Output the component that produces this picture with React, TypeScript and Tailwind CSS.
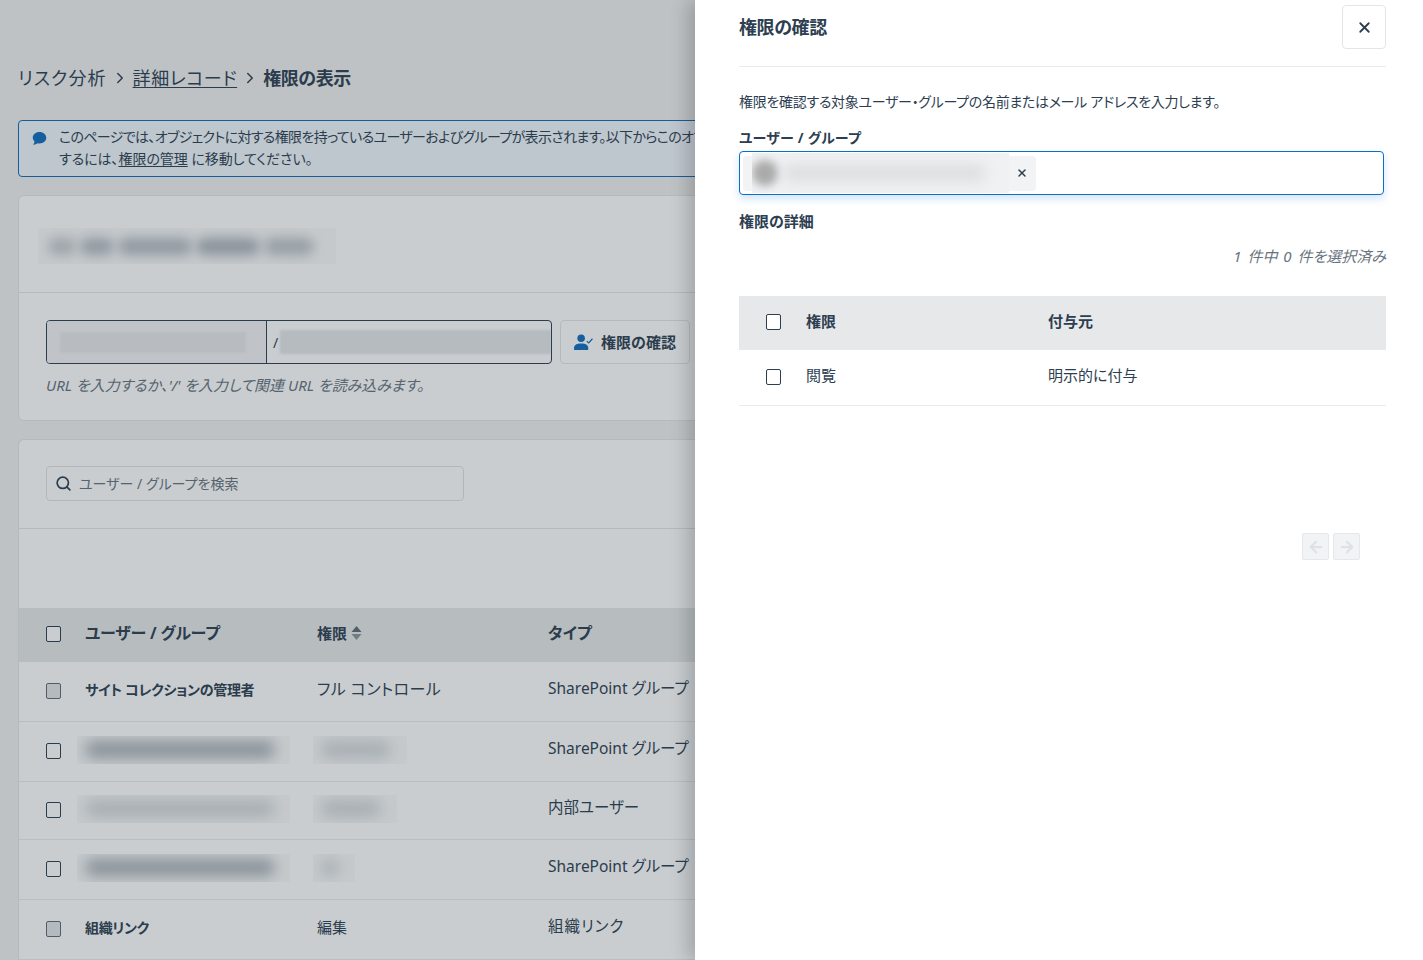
import React from "react";
import { ArrowLeft, ArrowRight, ChevronRight, Search, X } from "lucide-react";

const Checkbox = ({ disabled }: { disabled?: boolean }) => (
  <span
    className={
      disabled
        ? "block w-[15px] h-[16px] mb-[2px] shrink-0 rounded-[2px] border border-[#5f6b76] bg-[#e5e6e8]"
        : "block w-[15px] h-[16px] mb-[2px] shrink-0 rounded-[2px] border border-[#2d3e50] bg-white"
    }
  />
);

const Blur = ({ w, h, tone, box }: { w: number; h: number; tone: string; box: number }) => (
  <div className="overflow-hidden flex items-center pl-[8px] h-[28px] mb-[4px] bg-[#fafafa]" style={{ width: box }}>
    <div className={`rounded-full blur-[7px] ${tone}`} style={{ width: w, height: h }} />
  </div>
);

const titleBlobs = [
  { w: 28, tone: "bg-[#c4c8cc]" },
  { w: 34, tone: "bg-[#b4b9bf]" },
  { w: 74, tone: "bg-[#b5bac0]" },
  { w: 64, tone: "bg-[#acb2b8]" },
  { w: 50, tone: "bg-[#bcc1c6]" },
];

const rows = [
  { name: "サイト コレクションの管理者", perm: "フル コントロール", permClass: "text-[16px] tracking-[0.4px]", type: "SharePoint グループ", h: "h-[60px]", disabled: true },
  { blur: "bg-[#a9b0b6]", permW: 70, type: "SharePoint グループ", h: "h-[60px]" },
  { blur: "bg-[#d3d6d9]", permW: 60, type: "内部ユーザー", h: "h-[58px]" },
  { blur: "bg-[#a9b0b6]", permW: 18, type: "SharePoint グループ", h: "h-[60px]" },
  { name: "組織リンク", perm: "編集", permClass: "text-[15px]", type: "組織リンク", typeClass: "tracking-[1px]", h: "h-[60px]", disabled: true },
];

export default function App() {
  return (
    <div className="relative h-[960px] overflow-hidden bg-[#f1f1f1] text-[14px] text-[#2d3e50] font-['Noto_Sans','Noto_Sans_CJK_JP',sans-serif] [font-feature-settings:'palt']">
      <div className="w-[1387px] ml-[18px]">
        <div className="flex items-center h-[24px] mt-[66px] text-[18px]">
          <span className="tracking-[1.1px]">リスク分析</span>
          <ChevronRight className="w-[18px] h-[18px] mx-[4px]" />
          <span className="underline underline-offset-2 tracking-[0.6px]">詳細レコード</span>
          <ChevronRight className="w-[18px] h-[18px] mx-[4px]" />
          <span className="font-bold tracking-[-0.4px]">権限の表示</span>
        </div>

        <div className="flex mt-[30px] h-[57px] rounded-[4px] border border-[#0f6cbd] bg-[#f0f6fc] pl-[13px] pt-[5px] leading-[22px] whitespace-nowrap">
          <svg viewBox="0 0 16 16" className="w-[15px] h-[15px] mt-[5px] mr-[12px] shrink-0 fill-[#0f6cbd]">
            <path d="M8 1C3.9 1 .8 3.7.8 7c0 1.6.7 3 1.9 4.1-.1 1.2-.7 2.4-1.3 3.2-.1.2 0 .5.3.4 1.7-.2 3.2-.9 4.2-1.7.7.2 1.4.2 2.1.2 4.100 0 7.200-2.700 7.200-6S12.100 1 8 1z" />
          </svg>
          <div>
            <div className="tracking-[-0.65px]">このページでは、オブジェクトに対する権限を持っているユーザーおよびグループが表示されます。以下からこのオブ</div>
            <div className="tracking-[-0.05px]">
              するには、<span className="underline underline-offset-2">権限の管理</span> に移動してください。
            </div>
          </div>
        </div>

        <div className="mt-[18px] h-[226px] rounded-[6px] border border-[#e3e5e7] bg-white">
          <div className="h-[97px] border-b border-[#e3e5e7] pl-[19px] pt-[32px]">
            <div className="flex items-center gap-[4px] w-[298px] h-[36px] pl-[10px] bg-[#fafafa] overflow-hidden">
              {titleBlobs.map((b, i) => (
                <div key={i} className={`h-[17px] rounded-full blur-[6px] ${b.tone}`} style={{ width: b.w }} />
              ))}
            </div>
          </div>
          <div className="pl-[27px] pt-[27px]">
            <div className="flex">
              <div className="flex w-[506px] h-[44px] rounded-[4px] border border-[#2d3e50] overflow-hidden">
                <div className="w-[220px] shrink-0 border-r border-[#2d3e50] bg-[#f3f3f4] flex items-center pl-[13px]">
                  <div className="w-[186px] h-[21px] bg-[#e8e9ea] blur-[1px]" />
                </div>
                <div className="flex-1 flex items-center pl-[6px] gap-[2px]">
                  <span>/</span>
                  <div className="w-[271px] h-[24px] bg-[#e6e7e9] blur-[1px]" />
                </div>
              </div>
              <button className="flex items-center justify-center gap-[8px] w-[130px] h-[44px] ml-[8px] rounded-[4px] border border-[#e3e5e7] text-[15px] font-bold">
                <svg viewBox="0 0 20 18" className="w-[19px] h-[17px] fill-[#0f6cbd]">
                  <circle cx="7.500" cy="4.500" r="4" />
                  <path d="M0 17v-2.500C0 11.500 3 10 7.500 10s7.500 1.500 7.500 4.500V17z" />
                  <path d="M13.500 7.500l2 2 4-4.500" fill="none" stroke="#0f6cbd" strokeWidth="1.300" />
                </svg>
                権限の確認
              </button>
            </div>
            <p className="mt-[10px] leading-[22px] text-[15px] italic text-[#66727d]">
              URL を入力するか、'/' を入力して関連 URL を読み込みます。
            </p>
          </div>
        </div>

        <div className="mt-[18px] rounded-t-[6px] border border-b-0 border-[#e3e5e7] bg-white">
          <div className="h-[89px] border-b border-[#e3e5e7] pl-[27px] pt-[26px]">
            <div className="flex items-center w-[418px] h-[35px] rounded-[4px] border border-[#e0e2e4] pl-[8px] text-[#66727d]">
              <Search className="w-[17px] h-[17px] mr-[7px] text-[#2d3e50]" strokeWidth={2.4} />
              ユーザー / グループを検索
            </div>
          </div>
          <div className="h-[79px]" />
          <div className="flex items-center h-[54px] bg-[#e7e8e9] pl-[27px] font-bold">
            <Checkbox />
            <span className="w-[232px] ml-[24px] mb-[4px] text-[16px] tracking-[-0.2px]">ユーザー / グループ</span>
            <span className="w-[231px] mb-[4px] flex items-center gap-[4px] text-[15px]">
              権限
              <svg viewBox="0 0 10 14" className="w-[11px] h-[14px] fill-[#5f6b76]">
                <path d="M5 0l5 6H0z" />
                <path d="M5 14L0 8h10z" className="fill-[#8a939b]" />
              </svg>
            </span>
            <span className="mb-[4px] text-[16px]">タイプ</span>
          </div>
          {rows.map((row, i) => (
            <div key={i} className={`flex items-center pl-[27px] border-b border-[#e9ebec] ${row.h}`}>
              <Checkbox disabled={row.disabled} />
              {row.name ? (
                <span className="w-[232px] ml-[24px] mb-[5px] font-bold tracking-[-0.3px]">{row.name}</span>
              ) : (
                <div className="w-[240px] ml-[16px]">
                  <Blur w={190} h={17} tone={row.blur!} box={213} />
                </div>
              )}
              {row.perm ? (
                <span className={`w-[231px] mb-[5px] ${row.permClass}`}>{row.perm}</span>
              ) : (
                <div className="w-[231px] -ml-[4px] mr-[4px]">
                  <Blur w={row.permW!} h={17} tone="bg-[#d3d6d9]" box={row.permW! + 24} />
                </div>
              )}
              <span className={`mb-[5px] text-[15.500px] ${row.typeClass ?? ""}`}>{row.type}</span>
            </div>
          ))}
        </div>
      </div>

      <div className="absolute inset-0 bg-[#283844]/25" />

      <div className="absolute top-0 right-0 w-[728px] h-[960px] bg-white shadow-[-8px_0_16px_rgba(0,0,0,0.18)] pl-[44px] pr-[37px]">
        <div className="flex items-center justify-between h-[67px] pt-[5px] pb-[17px] border-b border-[#e9ebec]">
          <h2 className="text-[18px] font-bold tracking-[-0.4px]">権限の確認</h2>
          <button className="flex items-center justify-center w-[44px] h-[44px] rounded-[4px] border border-[#e3e5e7]">
            <X className="w-[17px] h-[17px]" strokeWidth={2.5} />
          </button>
        </div>
        <p className="mt-[24px] leading-[22px] tracking-[-0.3px]">権限を確認する対象ユーザー・グループの名前またはメール アドレスを入力します。</p>
        <div className="mt-[15px] leading-[20px] font-bold tracking-[0.2px]">ユーザー / グループ</div>
        <div className="flex items-center w-[645px] h-[44px] mt-[3px] rounded-[4px] border border-[#0a6ecb] pl-[3px] shadow-[0_4px_8px_rgba(10,110,203,0.18)]">
          <div className="flex items-center w-[293px] h-[35px] rounded-[4px] bg-[#f2f3f4]">
            <div className="flex items-center w-[257px] h-[40px] ml-[9px] bg-[#f0f1f3] overflow-hidden">
              <div className="w-[26px] h-[26px] shrink-0 rounded-full bg-[#aaaaaa] blur-[4px]" />
              <div className="w-[200px] h-[16px] ml-[6px] bg-[#dcdddf] blur-[7px]" />
            </div>
            <X className="w-[12px] h-[12px] ml-[7px]" strokeWidth={3} />
          </div>
        </div>
        <div className="mt-[15px] leading-[22px] text-[15px] font-bold">権限の詳細</div>
        <div className="mt-[13px] leading-[22px] text-right text-[15px] italic text-[#66727d] [word-spacing:2px]">1 件中 0 件を選択済み</div>
        <div className="flex items-center h-[54px] mt-[29px] bg-[#e7e8ea] pl-[27px] font-bold text-[15px]">
          <Checkbox />
          <span className="w-[242px] ml-[25px] mb-[4px]">権限</span>
          <span className="mb-[4px]">付与元</span>
        </div>
        <div className="flex items-center h-[56px] pl-[27px] border-b border-[#e9ebec] text-[15px]">
          <Checkbox />
          <span className="w-[242px] ml-[25px] mb-[4px]">閲覧</span>
          <span className="mb-[4px]">明示的に付与</span>
        </div>
        <div className="flex justify-end gap-[4px] mt-[127px] pr-[26px]">
          <button className="flex items-center justify-center w-[27px] h-[27px] rounded-[2px] border border-[#e5e7e9] bg-[#f2f3f4]">
            <ArrowLeft className="w-[18px] h-[18px] text-[#dfe2e4]" strokeWidth={3} />
          </button>
          <button className="flex items-center justify-center w-[27px] h-[27px] rounded-[2px] border border-[#e5e7e9] bg-[#f2f3f4]">
            <ArrowRight className="w-[18px] h-[18px] text-[#dfe2e4]" strokeWidth={3} />
          </button>
        </div>
      </div>
    </div>
  );
}
